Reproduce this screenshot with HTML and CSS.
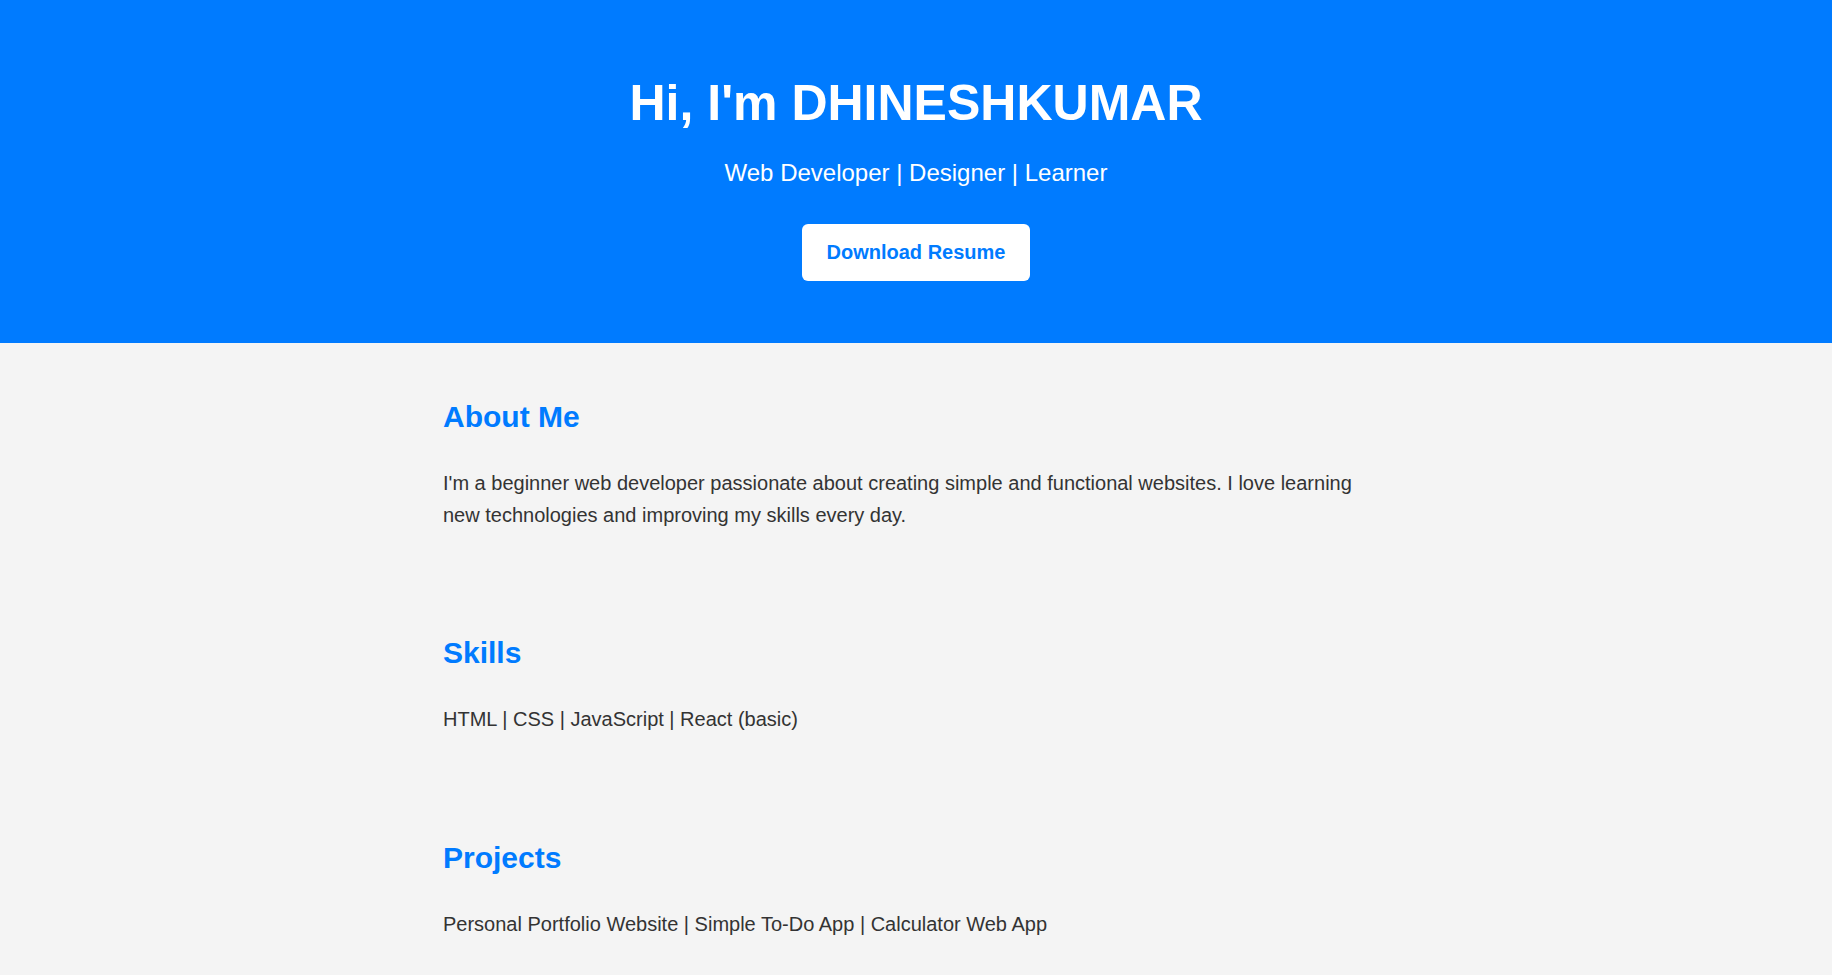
FILE: index.html
```html
<!DOCTYPE html>
<html lang="en">
<head>
<meta charset="UTF-8">
<title>DHINESHKUMAR - Portfolio</title>
<link rel="stylesheet" href="styles.css">
</head>
<body>
<header class="hero">
  <h1 class="hero-title">Hi, I'm DHINESHKUMAR</h1>
  <p class="hero-sub">Web Developer | Designer | Learner</p>
  <a class="btn" href="#">Download Resume</a>
</header>
<main class="content">
  <section class="block">
    <h2 class="block-title">About Me</h2>
    <p class="block-text">I'm a beginner web developer passionate about creating simple and functional websites. I love learning new technologies and improving my skills every day.</p>
  </section>
  <section class="block">
    <h2 class="block-title">Skills</h2>
    <p class="block-text">HTML | CSS | JavaScript | React (basic)</p>
  </section>
  <section class="block">
    <h2 class="block-title">Projects</h2>
    <p class="block-text">Personal Portfolio Website | Simple To-Do App | Calculator Web App</p>
  </section>
</main>
</body>
</html>
```
FILE: styles.css
```css
* { box-sizing: border-box; }
html, body {
  margin: 0;
  padding: 0;
}
body {
  font-family: "Liberation Sans", Arial, sans-serif;
  font-size: 20px;
  line-height: 1.6;
  color: #333;
  background: #f4f4f4;
}
.hero {
  background: #007bff;
  color: #fff;
  text-align: center;
  padding: 62.5px 20px 62px;
  display: flex;
  flex-direction: column;
  align-items: center;
}
.hero-title {
  margin: 0 0 11px;
  font-size: 50px;
  line-height: 80px;
  font-weight: bold;
}
.hero-sub {
  margin: 0;
  font-size: 24px;
  line-height: 38.4px;
}
.btn {
  display: inline-block;
  margin-top: 32px;
  padding: 12.5px 25px;
  background: #fff;
  color: #007bff;
  font-weight: bold;
  font-size: 20px;
  line-height: 32px;
  text-decoration: none;
  border-radius: 6px;
}
.content {
  width: 946px;
  margin: 50px auto;
  display: flex;
  flex-direction: column;
  gap: 98.5px;
}
.block-title {
  margin: 0 0 26px;
  font-size: 30px;
  line-height: 48px;
  color: #007bff;
  font-weight: bold;
}
.block-text {
  margin: 0;
}
```
